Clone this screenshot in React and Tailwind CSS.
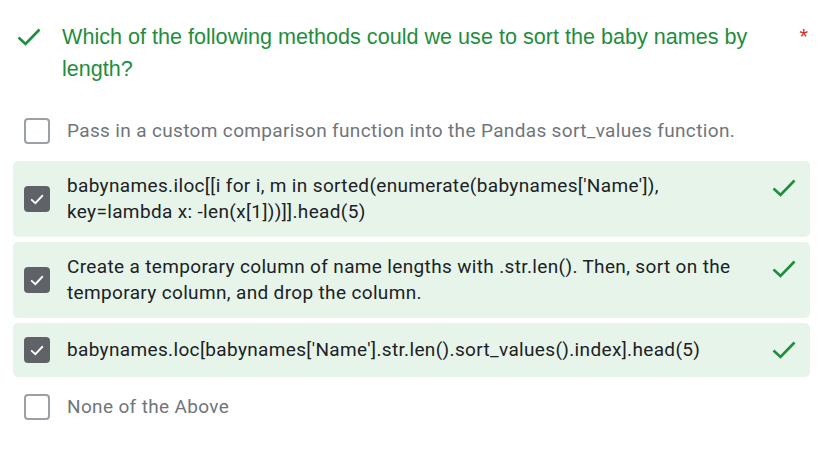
import React from "react";

const Check = ({ className }) => (
  <svg viewBox="0 0 24 18" className={className} fill="none">
    <path d="M1.5 9.5 L8.5 16 L22.5 1.5" stroke="currentColor" strokeWidth="2.6" />
  </svg>
);

const Box = ({ checked }) =>
  checked ? (
    <div className="w-[26px] h-[26px] rounded-[4px] bg-[#5f6368] flex items-center justify-center shrink-0">
      <svg viewBox="0 0 24 24" className="w-[20px] h-[20px]" fill="none">
        <path d="M5 12.5 L10 17 L19 7.5" stroke="white" strokeWidth="2.2" />
      </svg>
    </div>
  ) : (
    <div className="w-[26px] h-[26px] rounded-[4px] border-[2.5px] border-[#9aa0a6] bg-white shrink-0" />
  );

const options = [
  { text: "Pass in a custom comparison function into the Pandas sort_values function.", checked: false },
  { text: "babynames.iloc[[i for i, m in sorted(enumerate(babynames['Name']), key=lambda x: -len(x[1]))]].head(5)", checked: true },
  { text: "Create a temporary column of name lengths with .str.len(). Then, sort on the temporary column, and drop the column.", checked: true },
  { text: "babynames.loc[babynames['Name'].str.len().sort_values().index].head(5)", checked: true },
  { text: "None of the Above", checked: false },
];

export default function App() {
  return (
    <div className="w-[834px] h-[455px] bg-white pt-[21px]">
      <div className="flex items-start pl-[17px] pr-[24px]">
        <div className="w-[45px] h-[32px] flex items-center shrink-0">
          <Check className="w-[24px] h-[18px] text-[#1e8e3e]" />
        </div>
        <div className="flex-1 text-[21.6px] leading-[32px] text-[#1e8e3e] font-['Liberation_Sans',Arial,sans-serif] pr-[30px]">
          Which of the following methods could we use to sort the baby names by length?
        </div>
        <div className="text-[22px] leading-[32px] text-[#d93025] font-['Liberation_Sans',Arial,sans-serif] pr-[2px]">*</div>
      </div>
      <div className="mt-[21px] mx-[13px] w-[797px] flex flex-col gap-[5px] font-['Roboto',sans-serif]">
        {options.map((o, i) =>
          o.checked ? (
            <div key={i} className="flex items-center rounded-[5px] bg-[#e6f4ea] pl-[11px] pr-[14px] py-[12px]">
              <Box checked />
              <div className="flex-1 ml-[17px] text-[19px] tracking-[0.35px] leading-[26px] text-[#202124] pr-[24px]">{o.text}</div>
              <div className="h-[30px] flex items-center self-start">
                <Check className="w-[24px] h-[18px] text-[#1e8e3e]" />
              </div>
            </div>
          ) : (
            <div key={i} className="flex items-center pl-[11px] pr-[14px] py-[12px]">
              <Box />
              <div className="flex-1 ml-[17px] text-[19px] tracking-[0.35px] leading-[26px] text-[#70757a]">{o.text}</div>
            </div>
          )
        )}
      </div>
    </div>
  );
}
